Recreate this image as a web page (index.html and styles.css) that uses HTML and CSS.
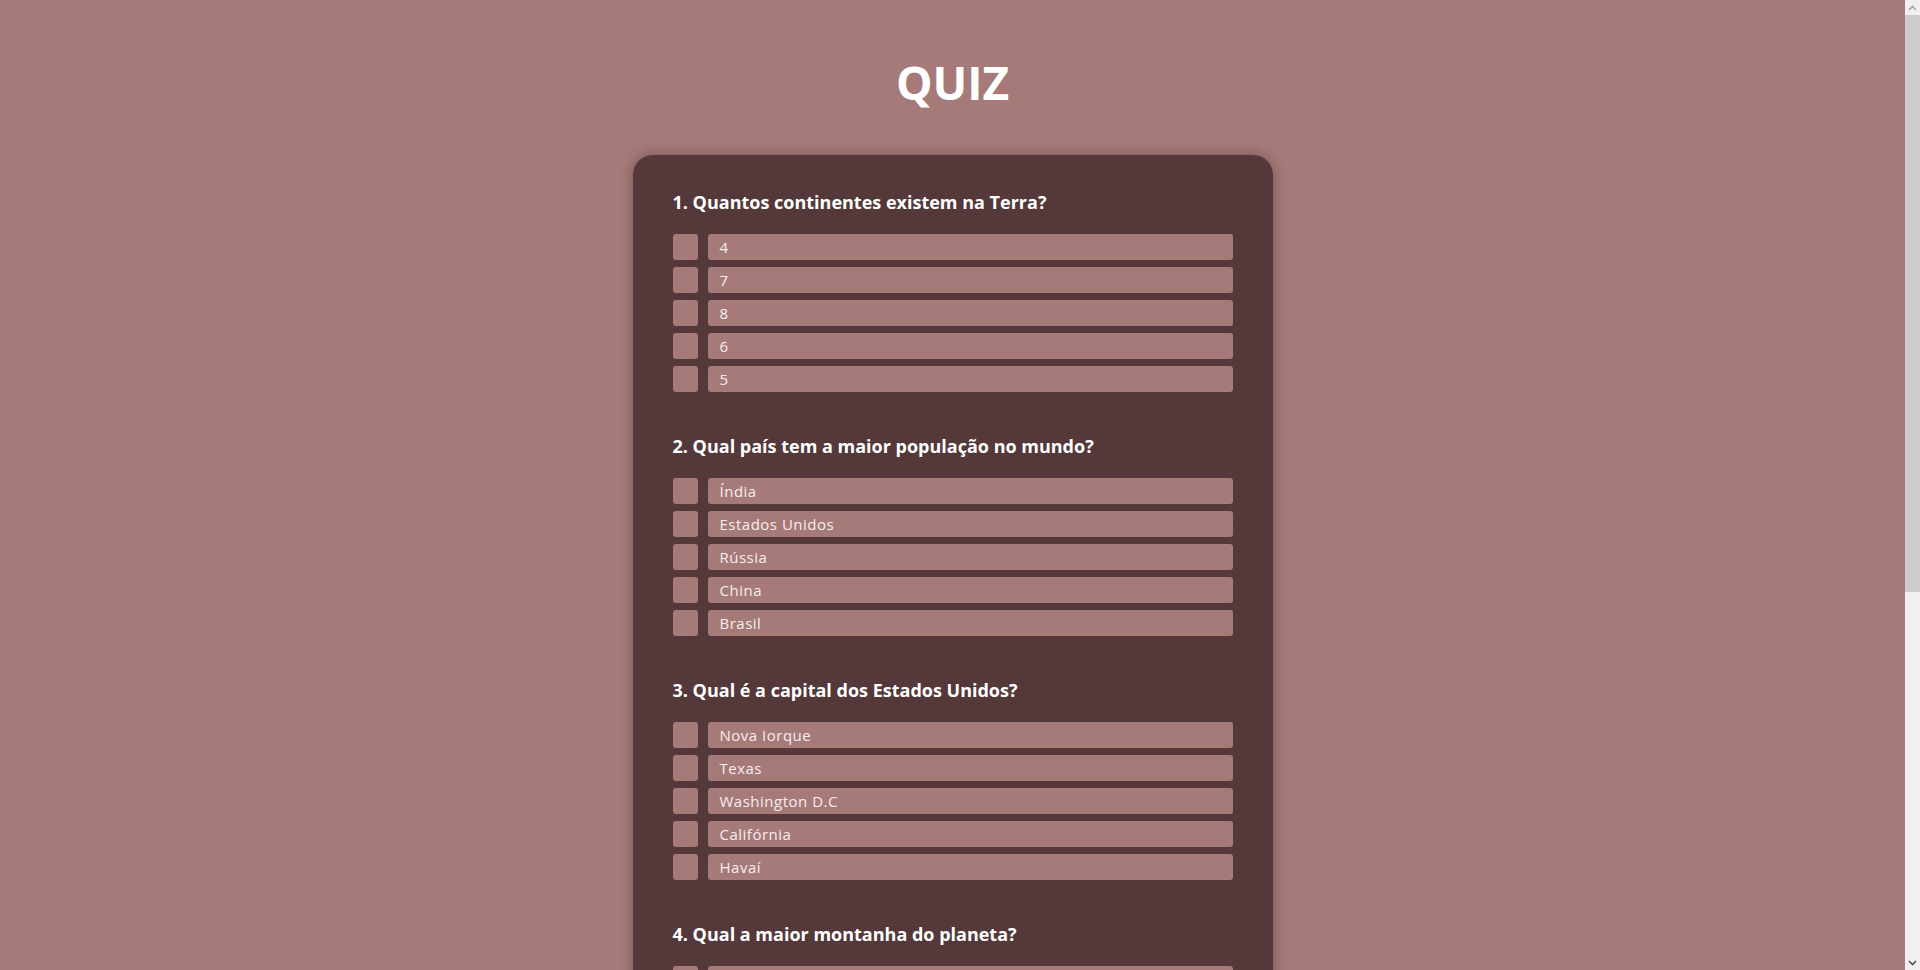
FILE: index.html
```html
<!DOCTYPE html>
<html lang="pt-BR">
<head>
<meta charset="utf-8">
<title>Quiz</title>
<link rel="stylesheet" href="styles.css">
</head>
<body>
<div class="page">
<h1 class="title">QUIZ</h1>
<form class="card">
  <section class="question">
    <h2 class="q-title">1. Quantos continentes existem na Terra?</h2>
    <label class="option"><input type="checkbox" class="check"><span class="answer">4</span></label>
    <label class="option"><input type="checkbox" class="check"><span class="answer">7</span></label>
    <label class="option"><input type="checkbox" class="check"><span class="answer">8</span></label>
    <label class="option"><input type="checkbox" class="check"><span class="answer">6</span></label>
    <label class="option"><input type="checkbox" class="check"><span class="answer">5</span></label>
  </section>
  <section class="question">
    <h2 class="q-title">2. Qual país tem a maior população no mundo?</h2>
    <label class="option"><input type="checkbox" class="check"><span class="answer">Índia</span></label>
    <label class="option"><input type="checkbox" class="check"><span class="answer">Estados Unidos</span></label>
    <label class="option"><input type="checkbox" class="check"><span class="answer">Rússia</span></label>
    <label class="option"><input type="checkbox" class="check"><span class="answer">China</span></label>
    <label class="option"><input type="checkbox" class="check"><span class="answer">Brasil</span></label>
  </section>
  <section class="question">
    <h2 class="q-title">3. Qual é a capital dos Estados Unidos?</h2>
    <label class="option"><input type="checkbox" class="check"><span class="answer">Nova Iorque</span></label>
    <label class="option"><input type="checkbox" class="check"><span class="answer">Texas</span></label>
    <label class="option"><input type="checkbox" class="check"><span class="answer">Washington D.C</span></label>
    <label class="option"><input type="checkbox" class="check"><span class="answer">Califórnia</span></label>
    <label class="option"><input type="checkbox" class="check"><span class="answer">Havaí</span></label>
  </section>
  <section class="question">
    <h2 class="q-title">4. Qual a maior montanha do planeta?</h2>
    <label class="option"><input type="checkbox" class="check"><span class="answer">Monte Everest</span></label>
    <label class="option"><input type="checkbox" class="check"><span class="answer">K2</span></label>
    <label class="option"><input type="checkbox" class="check"><span class="answer">Monte Kilimanjaro</span></label>
    <label class="option"><input type="checkbox" class="check"><span class="answer">Aconcágua</span></label>
    <label class="option"><input type="checkbox" class="check"><span class="answer">Monte Branco</span></label>
  </section>
  <section class="question">
    <h2 class="q-title">5. Qual o maior oceano do mundo?</h2>
    <label class="option"><input type="checkbox" class="check"><span class="answer">Atlântico</span></label>
    <label class="option"><input type="checkbox" class="check"><span class="answer">Índico</span></label>
    <label class="option"><input type="checkbox" class="check"><span class="answer">Pacífico</span></label>
    <label class="option"><input type="checkbox" class="check"><span class="answer">Ártico</span></label>
    <label class="option"><input type="checkbox" class="check"><span class="answer">Antártico</span></label>
  </section>
  <button type="button" class="submit">Enviar</button>
</form>
</div>
<div class="scrollbar" aria-hidden="true">
  <div class="sb-btn">
    <svg width="9" height="6" viewBox="0 0 9 6"><path d="M1 5 L4.5 1.5 L8 5" fill="none" stroke="#a3a3a3" stroke-width="1.6"/></svg>
  </div>
  <div class="sb-track"><div class="sb-thumb"></div></div>
  <div class="sb-btn">
    <svg width="9" height="6" viewBox="0 0 9 6"><path d="M1 1 L4.5 4.5 L8 1" fill="none" stroke="#505050" stroke-width="1.6"/></svg>
  </div>
</div>
</body>
</html>
```
FILE: styles.css
```css
html, body {
  margin: 0;
  padding: 0;
}

body {
  background: #a67a79;
  font-family: "Open Sans", "DejaVu Sans", sans-serif;
  color: #ffffff;
}

.page {
  margin-right: 15px;
  overflow: hidden;
}

.scrollbar {
  position: fixed;
  top: 0;
  right: 0;
  width: 15px;
  height: 100vh;
  background: #f0f0f0;
  display: flex;
  flex-direction: column;
}

.sb-btn {
  height: 15px;
  flex: none;
  display: flex;
  align-items: center;
  justify-content: center;
}

.sb-track {
  flex: 1;
  display: flex;
  flex-direction: column;
}

.sb-thumb {
  height: 577px;
  background: #cdcdcd;
}

.title {
  margin: 0;
  padding-top: 51px;
  text-align: center;
  font-size: 46px;
  font-weight: 700;
  line-height: normal;
  color: #ffffff;
}

.card {
  width: 560px;
  margin: 42px auto 86px;
  padding: 35px 40px 40px;
  background: #54383a;
  border-radius: 20px;
  box-shadow: 0 0 14px rgba(0, 0, 0, 0.3);
  display: flex;
  flex-direction: column;
}

.question {
  display: flex;
  flex-direction: column;
  gap: 7px;
  margin-bottom: 42px;
}

.q-title {
  margin: 0 0 13px;
  font-size: 18px;
  font-weight: 700;
  line-height: 24px;
  color: #ffffff;
}

.option {
  display: flex;
  gap: 10px;
  height: 26px;
  cursor: pointer;
}

.check {
  appearance: none;
  -webkit-appearance: none;
  margin: 0;
  width: 25px;
  height: 26px;
  flex: none;
  background: #a67a79;
  border-radius: 3px;
}

.answer {
  flex: 1;
  background: #a67a79;
  border-radius: 3px;
  padding-left: 12px;
  font-size: 15px;
  line-height: 26px;
  letter-spacing: 0.5px;
  color: #f6eeee;
}

.submit {
  align-self: center;
  height: 45px;
  padding: 0 40px;
  border: none;
  border-radius: 6px;
  background: #a67a79;
  color: #ffffff;
  font-family: inherit;
  font-size: 16px;
  font-weight: 700;
}
```
